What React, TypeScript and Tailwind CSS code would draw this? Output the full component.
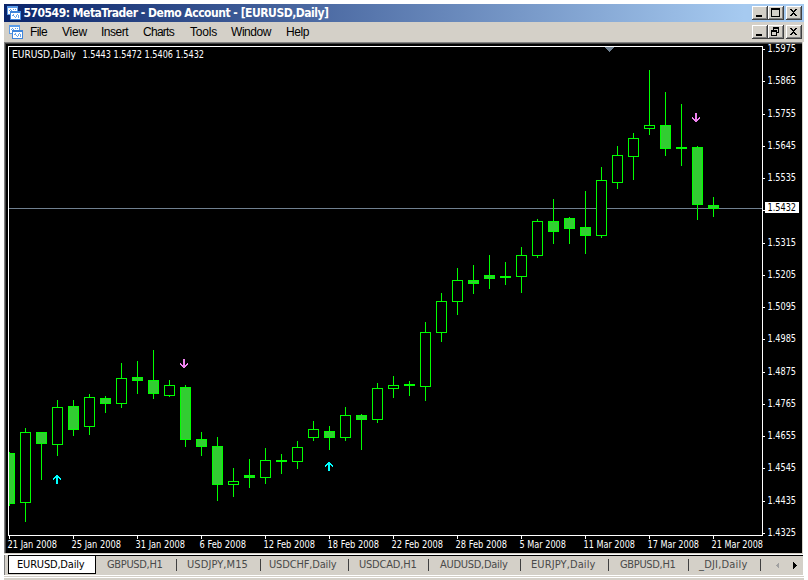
import { useLayoutEffect, useRef, useState } from "react";

type FitProps = { text: string; width: number; className?: string };

// Spreads a caption over the given width by adjusting its letter spacing.
function Fit({ text, width, className = "" }: FitProps) {
  const ref = useRef<HTMLSpanElement>(null);
  const [spacing, setSpacing] = useState(0);
  useLayoutEffect(() => {
    const natural = ref.current!.getBoundingClientRect().width;
    setSpacing((width - natural) / text.length);
  }, [text, width]);
  return (
    <span className={`whitespace-pre ${className}`}>
      <span ref={ref} style={{ letterSpacing: `${spacing}px` }}>{text}</span>
    </span>
  );
}

// [high, body top, body bottom, low, filled]
const candles: [number, number, number, number, number][] = [
  [452, 453, 504, 506, 1], [428, 432, 503, 522, 0], [432, 432, 444, 480, 1],
  [400, 407, 445, 456, 0], [400, 406, 430, 436, 1], [394, 397, 427, 435, 0],
  [396, 398, 404, 413, 1], [363, 378, 404, 408, 0], [361, 377, 381, 394, 1],
  [350, 380, 394, 399, 1], [380, 385, 396, 397, 0], [385, 387, 440, 447, 1],
  [432, 439, 447, 456, 1], [437, 446, 485, 501, 1], [468, 481, 485, 497, 0],
  [459, 475, 478, 488, 1], [448, 460, 478, 484, 0], [454, 460, 462, 474, 1],
  [441, 447, 462, 469, 0], [421, 429, 438, 441, 0], [426, 431, 438, 450, 1],
  [407, 415, 438, 441, 0], [414, 415, 420, 450, 1], [383, 388, 420, 423, 0],
  [376, 385, 389, 398, 0], [381, 384, 386, 396, 1], [322, 332, 387, 401, 0],
  [293, 301, 333, 342, 0], [268, 280, 302, 315, 0], [265, 280, 284, 294, 1],
  [255, 275, 279, 289, 1], [262, 276, 278, 285, 1], [247, 255, 277, 293, 0],
  [219, 221, 256, 258, 0], [199, 221, 232, 244, 1], [217, 218, 229, 244, 1],
  [191, 227, 236, 254, 1], [167, 180, 236, 238, 0], [146, 155, 183, 189, 0],
  [133, 138, 157, 180, 0], [70, 125, 129, 135, 0], [92, 125, 149, 156, 1],
  [104, 147, 149, 166, 1], [146, 147, 205, 220, 1], [197, 205, 209, 217, 1],
];

const prices: [number, string][] = [
  [49, "1.5975"], [81, "1.5865"], [114, "1.5755"], [146, "1.5645"], [178, "1.5535"],
  [210, ""], [243, "1.5315"], [275, "1.5205"], [307, "1.5095"], [339, "1.4985"],
  [372, "1.4875"], [404, "1.4765"], [436, "1.4655"], [468, "1.4545"], [501, "1.4435"],
  [533, "1.4325"],
];

const dates: [string, number][] = [
  ["21 Jan 2008", 49], ["25 Jan 2008", 49], ["31 Jan 2008", 49], ["6 Feb 2008", 46],
  ["12 Feb 2008", 51], ["18 Feb 2008", 51], ["22 Feb 2008", 51], ["28 Feb 2008", 51],
  ["5 Mar 2008", 46], ["11 Mar 2008", 51], ["17 Mar 2008", 51], ["21 Mar 2008", 51],
];

const ui = "font-['DejaVu_Sans_Condensed','DejaVu_Sans',sans-serif] [font-stretch:condensed]";

function Arrow({ x, y, up = false }: { x: number; y: number; up?: boolean }) {
  return (
    <path
      transform={up ? `translate(${x} ${y + 9}) scale(1 -1)` : `translate(${x} ${y})`}
      fill={up ? "#00ffff" : "#ee82ee"}
      d="M3 0h2v9h-2z M0 4h1v1h1v1h1v1h2v-1h1v-1h1v-1h1v2h-1v1h-1v1h-4v-1h-1v-1h-1z"
    />
  );
}

function Chart() {
  return (
    <svg width="796" height="509" viewBox="6 44 796 509" shapeRendering="crispEdges" className={`block ${ui}`}>
      <rect x="6" y="44" width="796" height="509" fill="#000" />
      <path d="M9 208h754v1h-754z" fill="#708090" />
      {candles.map(([h, t, b, l, f], i) => {
        const c = 9 + i * 16;
        const x = i === 0 ? 9 : c - 5;
        const w = i === 0 ? 6 : 11;
        return (
          <g key={i}>
            <rect x={c} y={h} width="1" height={l - h} fill="#00ff00" />
            <rect x={x} y={t} width={w} height={b - t} fill="#00ff00" />
            {b - t > 2 && (
              <rect x={i === 0 ? 9 : x + 1} y={t + 1} width={i === 0 ? 5 : 9} height={b - t - 2} fill={f ? "#32cd32" : "#000"} />
            )}
          </g>
        );
      })}
      <path d="M8 46h755v490H8z M9 47v488h753V47z" fill="#fff" fillRule="evenodd" />
      <path d="M605 47h9v1h-1v1h-1v1h-1v1h-1v1h-1v-1h-1v-1h-1v-1h-1v-1h-1z" fill="#708090" />
      <Arrow x={180} y={359} />
      <Arrow x={692} y={113} />
      <Arrow x={53} y={475} up />
      <Arrow x={325} y={462} up />
      {prices.map(([y, label]) => (
        <g key={y} fill="#fff">
          <rect x="763" y={y} width="2" height="1" />
          {label && <text x="767.5" y={y + 3} fontSize="10" textLength="28.5" lengthAdjust="spacingAndGlyphs">{label}</text>}
        </g>
      ))}
      <rect x="765" y="202" width="34" height="11" fill="#fff" />
      <text x="767.5" y="211" fontSize="10" textLength="28.5" lengthAdjust="spacingAndGlyphs" fill="#000">1.5432</text>
      {dates.map(([label, w], i) => (
        <g key={label} fill="#fff">
          <rect x={9 + i * 64} y="536" width="1" height="3" />
          <text x={7.5 + i * 64} y="548" fontSize="10" textLength={w + 0.5} lengthAdjust="spacingAndGlyphs">{label}</text>
        </g>
      ))}
      <text x="12" y="58" fontSize="10" fill="#fff" textLength="64" lengthAdjust="spacingAndGlyphs">EURUSD,Daily</text>
      <text x="82.5" y="58" fontSize="10" fill="#fff" textLength="121.5" lengthAdjust="spacingAndGlyphs">1.5443 1.5472 1.5406 1.5432</text>
    </svg>
  );
}

function AppIcon() {
  return (
    <svg width="14" height="14" viewBox="0 0 14 14" shapeRendering="crispEdges" className="block shrink-0">
      <path d="M0 0h11v9H0z" fill="#5b9be8" />
      <path d="M1 2h9v6H1z" fill="#fff" />
      <path d="M2 4h1v1H2z M3 3h1v1H3z M4 4h1v1H4z M6 3h1v1H6z M8 3h1v1H8z" fill="#5b9be8" />
      <path d="M3 5h11v9H3z" fill="#3f86dc" />
      <path d="M4 7h9v6H4z" fill="#fff" />
      <path d="M5 9h1v1H5z M6 8h1v2H6z M7 10h1v1H7z M8 11h1v1H8z M9 9h1v2H9z M10 8h1v1h-1z M11 9h1v3h-1z" fill="#6aa5ea" />
    </svg>
  );
}

const glyphs: Record<string, string> = {
  min: "M4 9h6v2H4z",
  max: "M3 2h9v9H3z M4 4v6h7V4z",
  restore: "M5 2h6v6H9v3H3V5h2z M6 4v1h3v2h1V4z M4 7v3h4V7z",
  close: "M4 3h2v1h1v1h1v-1h1v-1h2v1h-1v1h-1v1h-1v1h1v1h1v1h1v1h-2v-1h-1v-1h-1v1h-1v1h-2v-1h1v-1h1v-1h1v-1h-1v-1h-1v-1h-1z",
};

function CaptionButton({ kind }: { kind: string }) {
  return (
    <svg width="16" height="14" viewBox="0 0 16 14" shapeRendering="crispEdges" className="block">
      <path d="M0 0h16v14H0z" fill="#404040" />
      <path d="M0 0h15v13H0z" fill="#fff" />
      <path d="M1 1h14v12H1z" fill="#808080" />
      <path d="M1 1h13v11H1z" fill="#d4d0c8" />
      <path d={glyphs[kind]} fill="#000" fillRule="evenodd" />
    </svg>
  );
}

function Buttons({ kinds }: { kinds: string[] }) {
  return (
    <div className="ml-auto mr-[2px] flex">
      <CaptionButton kind={kinds[0]} />
      <CaptionButton kind={kinds[1]} />
      <div className="ml-[2px]"><CaptionButton kind="close" /></div>
    </div>
  );
}

const menus: [string, number, string][] = [
  ["File", 17, "w-[32px]"], ["View", 25, "w-[39px]"], ["Insert", 27, "w-[42px]"],
  ["Charts", 31, "w-[47px]"], ["Tools", 27, "w-[41px]"], ["Window", 40, "w-[55px]"],
  ["Help", 23, "w-[40px]"],
];

const tabs: [string, number, string][] = [
  ["GBPUSD,H1", 55.5, "w-[81px] pl-[11px]"],
  ["USDJPY,M15", 61, "w-[84px] pl-[10px]"],
  ["USDCHF,Daily", 67.5, "w-[88px] pl-[8px]"],
  ["USDCAD,H1", 57.5, "w-[80px] pl-[10px]"],
  ["AUDUSD,Daily", 67.5, "w-[92px] pl-[11px]"],
  ["EURJPY,Daily", 64.5, "w-[88px] pl-[10px]"],
  ["GBPUSD,H1", 55.5, "w-[80px] pl-[11px]"],
  ["_DJI,Daily", 48.5, "w-[72px] pl-[10px]"],
];

export default function App() {
  return (
    <div className={`flex h-[580px] w-[808px] flex-col overflow-hidden bg-white pl-[4px] pt-[4px] ${ui}`}>
      <div className="flex h-[18px] w-[800px] items-center bg-[linear-gradient(90deg,#0a246a_0px,#a6caf0_740px)] pl-[3px]">
        <AppIcon />
        <Fit text="570549: MetaTrader - Demo Account - [EURUSD,Daily]" width={305} className="ml-[2.5px] text-[12px] font-bold leading-[18px] text-white" />
        <Buttons kinds={["min", "max"]} />
      </div>
      <div className="flex h-[20px] w-[800px] items-center bg-[#d4d0c8] pl-[5px]">
        <AppIcon />
        <div className="ml-[7px] flex font-['Liberation_Sans',Arial,sans-serif] text-[12px] leading-[20px] text-black">
          {menus.map(([t, w, c]) => (
            <div key={t} className={c}><Fit text={t} width={w} /></div>
          ))}
        </div>
        <Buttons kinds={["min", "restore"]} />
      </div>
      <div className="h-[512px] w-[799px] border-b border-r border-[#d4d0c8]">
        <div className="h-[511px] w-[798px] border-l border-t border-[#808080]">
          <div className="h-[510px] w-[797px] border-l border-t border-[#404040]">
            <Chart />
          </div>
        </div>
      </div>
      <div className="h-px w-[799px] bg-white" />
      <div className="flex h-[20px] w-[799px] bg-[#d4d0c8] text-[11px] leading-[17px] text-[#4a4a4a]">
        <div className="h-[20px] w-[4px] border-l border-[#808080]" />
        <div className="h-[19px] w-[88px] border border-black bg-white pl-[8px] text-black">
          <Fit text="EURUSD,Daily" width={67.5} />
        </div>
        <div className="flex h-[20px] w-[707px] border-t border-black">
          {tabs.map(([t, w, c], i) => (
            <div key={i} className={`flex justify-between ${c}`}>
              <Fit text={t} width={w} />
              <div className="mt-[3px] h-[12px] w-px bg-[#404040]" />
            </div>
          ))}
          <svg width="42" height="18" viewBox="761 556 42 18" shapeRendering="crispEdges">
            <path d="M776 565h1v-1h1v-1h1v5h-1v-1h-1v-1h-1z" fill="#a0a0a0" />
            <path d="M793 562h1v1h1v1h1v1h1v1h-1v1h-1v1h-1v1h-1z" fill="#000" />
          </svg>
        </div>
      </div>
      <div className="h-px w-[800px] bg-white" />
      <div className="h-px w-[800px] bg-[#d4d0c8]" />
      <div className="h-px w-[800px] bg-white" />
      <div className="h-[2px] w-[800px] bg-[#d4d0c8]" />
    </div>
  );
}
